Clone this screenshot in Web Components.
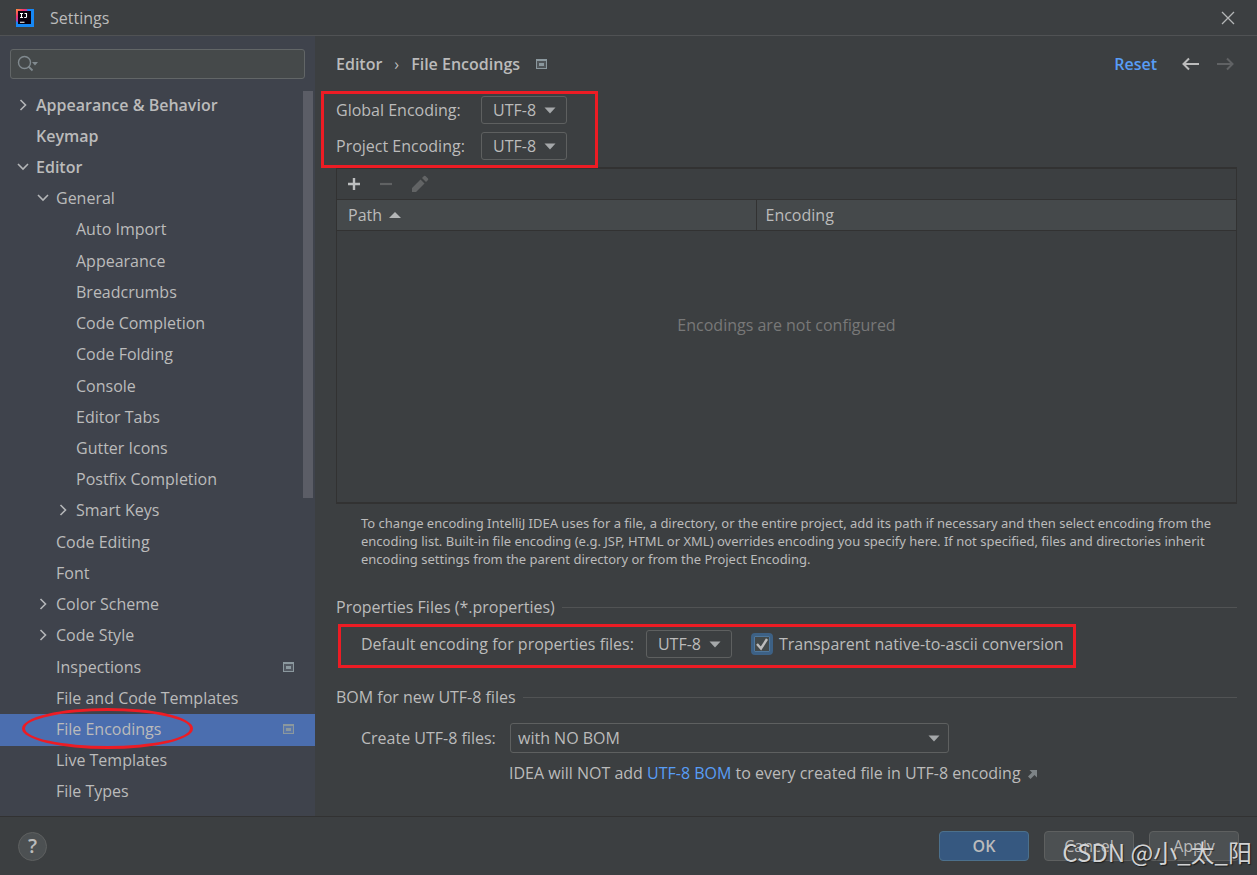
<!DOCTYPE html>
<html lang="en">
<head>
<meta charset="utf-8">
<title>Settings</title>
<style>
  html, body { margin: 0; }
  body {
    --bg: #3c3f41; --side: #3f434c; --line: #323232; --edge: #5e6060; --text: #bbbbbb; --link: #589df6; --mark: #ed1c24;
    background: var(--bg); color: var(--text);
    font: 16px/20px "Open Sans", "Noto Sans", sans-serif;
  }
</style>
</head>
<body>
<settings-window>
  <title-bar slot="title">Settings</title-bar>
  <settings-sidebar slot="sidebar">
    <tree-item level="0" state="closed">Appearance &amp; Behavior</tree-item>
    <tree-item level="0">Keymap</tree-item>
    <tree-item level="0" state="open">Editor</tree-item>
    <tree-item level="1" state="open">General</tree-item>
    <tree-item level="2">Auto Import</tree-item>
    <tree-item level="2">Appearance</tree-item>
    <tree-item level="2">Breadcrumbs</tree-item>
    <tree-item level="2">Code Completion</tree-item>
    <tree-item level="2">Code Folding</tree-item>
    <tree-item level="2">Console</tree-item>
    <tree-item level="2">Editor Tabs</tree-item>
    <tree-item level="2">Gutter Icons</tree-item>
    <tree-item level="2">Postfix Completion</tree-item>
    <tree-item level="2" state="closed">Smart Keys</tree-item>
    <tree-item level="1">Code Editing</tree-item>
    <tree-item level="1">Font</tree-item>
    <tree-item level="1" state="closed">Color Scheme</tree-item>
    <tree-item level="1" state="closed">Code Style</tree-item>
    <tree-item level="1" project>Inspections</tree-item>
    <tree-item level="1">File and Code Templates</tree-item>
    <tree-item level="1" project selected>File Encodings<mark-outline slot="mark" shape="ellipse"></mark-outline></tree-item>
    <tree-item level="1">Live Templates</tree-item>
    <tree-item level="1">File Types</tree-item>
  </settings-sidebar>
  <page-header slot="main"></page-header>
  <encodings-page slot="main"></encodings-page>
  <dialog-footer slot="footer"></dialog-footer>
  <corner-signature slot="footer">CSDN @小_太_阳</corner-signature>
</settings-window>

<script>
const define = (name, html, setup) => {
  const template = document.createElement('template');
  template.innerHTML = html;
  customElements.define(name, class extends HTMLElement {
    constructor() {
      super();
      this.attachShadow({ mode: 'open' }).append(template.content.cloneNode(true));
    }
    connectedCallback() { if (setup) setup(this, this.shadowRoot); }
  });
};

define('settings-window', `
<style>
  :host { display: flex; flex-direction: column; min-height: 100vh; }
  .body { flex: 1; display: flex; }
  main { flex: 1; min-width: 0; display: flex; flex-direction: column; padding: 0 20px 0 21px; }
  footer { position: relative; border-top: 1px solid var(--line); }
</style>
<slot name="title"></slot>
<div class="body"><slot name="sidebar"></slot><main><slot name="main"></slot></main></div>
<footer><slot name="footer"></slot></footer>`);

define('title-bar', `
<style>
  :host { display: flex; align-items: center; gap: 16px; height: 35px; padding: 0 20px 0 16px; border-bottom: 1px solid #505254; }
  span { flex: 1; }
  button { all: unset; display: flex; }
  svg { display: block; }
</style>
<svg width="18" height="18" viewBox="0 0 18 18" aria-hidden="true">
  <defs>
    <linearGradient id="g" x1="0" y1="0" x2="1" y2="1">
      <stop offset="0" stop-color="#fc9a3c"/><stop offset=".22" stop-color="#f5346b"/><stop offset=".48" stop-color="#7a4be8"/><stop offset=".65" stop-color="#1a6ff0"/><stop offset="1" stop-color="#18a5f8"/>
    </linearGradient>
  </defs>
  <rect width="18" height="18" fill="url(#g)"/>
  <path d="M11 0h7v18H0v-6l4 3 11-1z" fill="#1688f5"/>
  <rect x="2" y="2" width="13" height="13" fill="#09000f"/>
  <path d="M4 4.500h3M5.500 4.500v4M4 8.500h3M8.500 4.500h2v3.200q0 .8-.8.8H8.200M4 13.200h4.500" fill="none" stroke="#fff" stroke-width="1.100"/>
</svg>
<span><slot></slot></span>
<button aria-label="Close"><svg width="18" height="18" viewBox="0 0 18 18"><path d="M3 3l12 12M15 3L3 15" stroke="#b4b6b7" stroke-width="1.300"/></svg></button>`);

define('project-icon', `
<style>:host { display: block; } svg { display: block; }</style>
<svg width="11" height="10" viewBox="0 0 11 10" aria-hidden="true">
  <path d="M0 0h11v10H0zM1 2v7h9V2z" fill="#8b989e" fill-rule="evenodd"/><path d="M1 2h9v7H1z" fill="#8b989e" opacity=".25"/><path d="M3 4h5v3H3z" fill="#8b989e"/>
</svg>`);

define('mark-outline', `
<style>
  :host { position: absolute; inset: 0; box-sizing: border-box; border: 3px solid var(--mark); pointer-events: none; z-index: 1; }
  :host([shape=ellipse]) { inset: -6px auto auto 22px; width: 171px; height: 41px; border-radius: 50%; }
</style>`);

define('settings-sidebar', `
<style>
  :host { flex: 0 0 315px; display: flex; flex-direction: column; background: var(--side); }
  .search { margin: 13px 10px 10px; box-sizing: border-box; height: 30px; display: flex; align-items: center; gap: 6px; padding: 0 6px; border: 1px solid #626667; border-radius: 3px; background: #45494a; }
  input { all: unset; flex: 1; min-width: 0; }
  .tree { position: relative; flex: 1; display: flex; flex-direction: column; padding: 1px 0 8px; }
  .bar { position: absolute; right: 2px; top: 2px; width: 10px; height: 56%; background: #5b5d66; }
</style>
<div class="search">
  <svg width="22" height="18" viewBox="0 0 22 18" aria-hidden="true"><circle cx="7.500" cy="7.500" r="6" fill="none" stroke="#818a8f" stroke-width="1.400"/><path d="M11.500 11.500l4 4" stroke="#818a8f" stroke-width="1.800"/><path d="M15 7h6l-3 3.500z" fill="#818a8f"/></svg>
  <input type="text" aria-label="Search settings">
</div>
<div class="tree" role="tree"><slot></slot><div class="bar"></div></div>`);

define('tree-item', `
<style>
  :host { position: relative; flex: 1 0 31px; display: flex; align-items: center; gap: 5px; padding: 0 21px 0 15px; }
  :host([level="0"]) { font-weight: 600; }
  :host([level="1"]) { padding-left: 35px; }
  :host([level="2"]) { padding-left: 55px; }
  :host([selected]) { background: #4b6eaf; }
  svg { flex: none; fill: none; stroke: #b4b6b8; stroke-width: 1.600; }
  path { visibility: hidden; }
  :host([state=open]) .open, :host([state=closed]) .closed { visibility: visible; }
  span { flex: 1; padding-bottom: 2px; white-space: nowrap; }
  svg, project-icon { padding-bottom: 2px; }
  project-icon { display: none; }
  :host([project]) project-icon { display: block; }
</style>
<svg width="16" height="16" viewBox="0 0 16 16" aria-hidden="true"><path class="closed" d="M5.500 3l5 5-5 5"/><path class="open" d="M3 5l5 5 5-5"/></svg>
<span><slot></slot></span><project-icon></project-icon><slot name="mark"></slot>`,
host => {
  host.setAttribute('role', 'treeitem');
  if (host.hasAttribute('state')) host.setAttribute('aria-expanded', host.getAttribute('state') === 'open');
});

define('page-header', `
<style>
  :host { display: flex; align-items: center; height: 56px; padding-right: 2px; }
  nav { flex: 1; display: flex; align-items: center; font-weight: 600; }
  i { margin: 0 12px; font-style: normal; font-weight: 400; }
  project-icon { margin-left: 16px; }
  a { color: var(--link); font-weight: 600; text-decoration: none; margin-right: 24px; }
  button { all: unset; display: flex; margin-left: 14px; }
  a + button { margin-left: 0; }
  svg { fill: none; stroke: #bcbcbc; stroke-width: 2; }
  [disabled] svg { stroke: #606264; }
</style>
<nav><span>Editor</span><i>›</i><span>File Encodings</span><project-icon></project-icon></nav>
<a href="#">Reset</a>
<button aria-label="Back"><svg width="20" height="16" viewBox="0 0 20 16"><path d="M18 8H3M8 2.500L2.500 8 8 13.500"/></svg></button>
<button aria-label="Forward" disabled><svg width="20" height="16" viewBox="0 0 20 16"><path d="M2 8h15M12 2.500L17.500 8 12 13.500"/></svg></button>`);

define('labelled-select', `
<style>
  :host { display: flex; align-items: center; }
  label { box-sizing: border-box; width: var(--label, auto); padding-right: 12px; white-space: nowrap; }
  .field { position: relative; width: 86px; }
  select { appearance: none; display: block; box-sizing: border-box; width: 100%; height: 28px; margin: 0; padding: 0 0 0 11px; border: 1px solid var(--edge); border-radius: 3px; background: transparent; color: inherit; font: inherit; outline: 0; }
  svg { position: absolute; right: 11px; top: 11px; pointer-events: none; }
  :host([wide]) .field { width: 439px; }
  :host([wide]) select { height: 30px; padding-left: 7px; }
  :host([wide]) svg { right: 9px; top: 12px; }
</style>
<label for="s"></label>
<div class="field"><select id="s"><option></option></select><svg width="12" height="7" viewBox="0 0 12 7" aria-hidden="true"><path d="M.5.500h11L6 6.500z" fill="#a5a8aa"/></svg></div>`,
(host, root) => {
  root.querySelector('label').textContent = host.getAttribute('label');
  root.querySelector('option').textContent = host.getAttribute('value');
});

define('encoding-table', `
<style>
  :host { flex: 1; display: flex; flex-direction: column; min-height: 200px; border: 1px solid var(--line); border-width: 2px 1px; }
  .tools { display: flex; align-items: center; gap: 16px; height: 30px; padding-left: 9px; }
  button { all: unset; display: flex; }
  table { width: 100%; border-collapse: collapse; table-layout: fixed; }
  .grid { flex: 1; }
  th { box-sizing: border-box; height: 31px; padding: 0 0 0 11px; text-align: left; font-weight: 400; background: #45494b; border-top: 1px solid var(--line); border-bottom: 1px solid var(--line); }
  th:first-child { width: 419px; border-right: 1px solid var(--line); }
  th + th { padding-left: 9px; }
  th svg { margin-left: 7px; vertical-align: 3px; }
  td { padding: 84px 0 0; text-align: center; vertical-align: top; color: #787878; }
</style>
<div class="tools">
  <button aria-label="Add"><svg width="16" height="16" viewBox="0 0 16 16"><path d="M8 2v12M2 8h12" stroke="#bdbfc0" stroke-width="2.400"/></svg></button>
  <button aria-label="Remove" disabled><svg width="16" height="16" viewBox="0 0 16 16"><path d="M2 8h12" stroke="#606263" stroke-width="2.200"/></svg></button>
  <button aria-label="Edit" disabled><svg width="20" height="20" viewBox="0 0 20 20"><path d="M2 18v-4L10.500 5.500l4 4L6 18zM12 4l2-2q.8-.6 1.500 0L18 4.500q.6.700 0 1.500l-2 2z" fill="#626465"/></svg></button>
</div>
<div class="grid"><table>
  <thead><tr><th>Path<svg width="12" height="6" viewBox="0 0 12 6" aria-hidden="true"><path d="M0 6l6-6 6 6z" fill="#b4b6b7"/></svg></th><th>Encoding</th></tr></thead>
  <tbody><tr><td colspan="2">Encodings are not configured</td></tr></tbody>
</table></div>`);

define('titled-line', `
<style>
  :host { display: flex; align-items: center; gap: 7px; height: 20px; white-space: nowrap; }
  :host::after { content: ""; flex: 1; height: 1px; background: #515354; }
</style><slot></slot>`);

define('check-option', `
<style>
  label { display: flex; align-items: center; gap: 6px; white-space: nowrap; }
  input { appearance: none; flex: none; box-sizing: border-box; width: 22px; height: 22px; margin: 0; border: 3px solid #3d6185; border-radius: 4px; background: #43494a; box-shadow: inset 0 0 0 1px #4f779c; }
  .box { position: relative; display: flex; }
  svg { position: absolute; inset: 0; pointer-events: none; }
</style>
<label><span class="box"><input type="checkbox" checked><svg width="22" height="22" viewBox="0 0 22 22" aria-hidden="true"><path d="M6 11l4 4.500L16 6" fill="none" stroke="#bcbcbc" stroke-width="2.400"/></svg></span><slot></slot></label>`);

define('encodings-page', `
<style>
  :host { flex: 1; display: flex; flex-direction: column; padding-bottom: 33px; }
  .pair { position: relative; align-self: flex-start; display: flex; flex-direction: column; gap: 8px; margin: -1px 0 -1px -15px; padding: 5px 31px 8px 15px; --label: 145px; }
  .note { margin: 10px 0 29px 25px; font: 13px/18px "Noto Sans", sans-serif; }
  .props { position: relative; align-self: flex-start; display: flex; align-items: center; gap: 19px; margin: 7px 0 19px 2px; padding: 6px 12px 10px 23px; }
  .bom { margin: 16px 0 10px 25px; --label: 149px; }
  .hint { margin-left: 173px; white-space: nowrap; }
  a { color: var(--link); text-decoration: none; }
  .hint svg { margin-left: 7px; }
</style>
<div class="pair">
  <labelled-select label="Global Encoding:" value="UTF-8"></labelled-select>
  <labelled-select label="Project Encoding:" value="UTF-8"></labelled-select>
  <mark-outline></mark-outline>
</div>
<encoding-table></encoding-table>
<div class="note">To change encoding IntelliJ IDEA uses for a file, a directory, or the entire project, add its path if necessary and then select encoding from the encoding list. Built-in file encoding (e.g. JSP, HTML or XML) overrides encoding you specify here. If not specified, files and directories inherit encoding settings from the parent directory or from the Project Encoding.</div>
<titled-line>Properties Files (*.properties)</titled-line>
<div class="props">
  <labelled-select label="Default encoding for properties files:" value="UTF-8"></labelled-select>
  <check-option>Transparent native-to-ascii conversion</check-option>
  <mark-outline></mark-outline>
</div>
<titled-line>BOM for new UTF-8 files</titled-line>
<labelled-select class="bom" wide label="Create UTF-8 files:" value="with NO BOM"></labelled-select>
<div class="hint">IDEA will NOT add <a href="#">UTF-8 BOM</a> to every created file in UTF-8 encoding<svg width="9" height="9" viewBox="0 0 9 9" aria-hidden="true"><path d="M1.500 0H9v7.500L6.500 5 2.500 9 0 6.500l4-4z" fill="#7d8386"/></svg></div>`);

define('dialog-footer', `
<style>
  :host { display: flex; align-items: center; gap: 15px; padding: 14px 18px; }
  button { box-sizing: border-box; width: 90px; height: 30px; padding: 0; border: 1px solid #5e6060; border-radius: 4px; background: #4c5052; color: inherit; font: inherit; }
  .ok { border-color: #4c708c; background: #365880; font-weight: 600; }
  .help { width: 29px; height: 29px; margin-right: auto; border-radius: 50%; font-size: 20px; font-weight: 600; line-height: 26px; }
</style>
<button class="help" aria-label="Help">?</button>
<button class="ok">OK</button><button>Cancel</button><button>Apply</button>`);

define('corner-signature', `
<style>
  :host { position: absolute; right: 5px; bottom: 5px; font: 24px/36px "Noto Sans CJK SC", sans-serif; color: #d2d3d4; text-shadow: 1px 1px 1px #0008; white-space: nowrap; pointer-events: none; }
</style><slot></slot>`);
</script>
</body>
</html>
